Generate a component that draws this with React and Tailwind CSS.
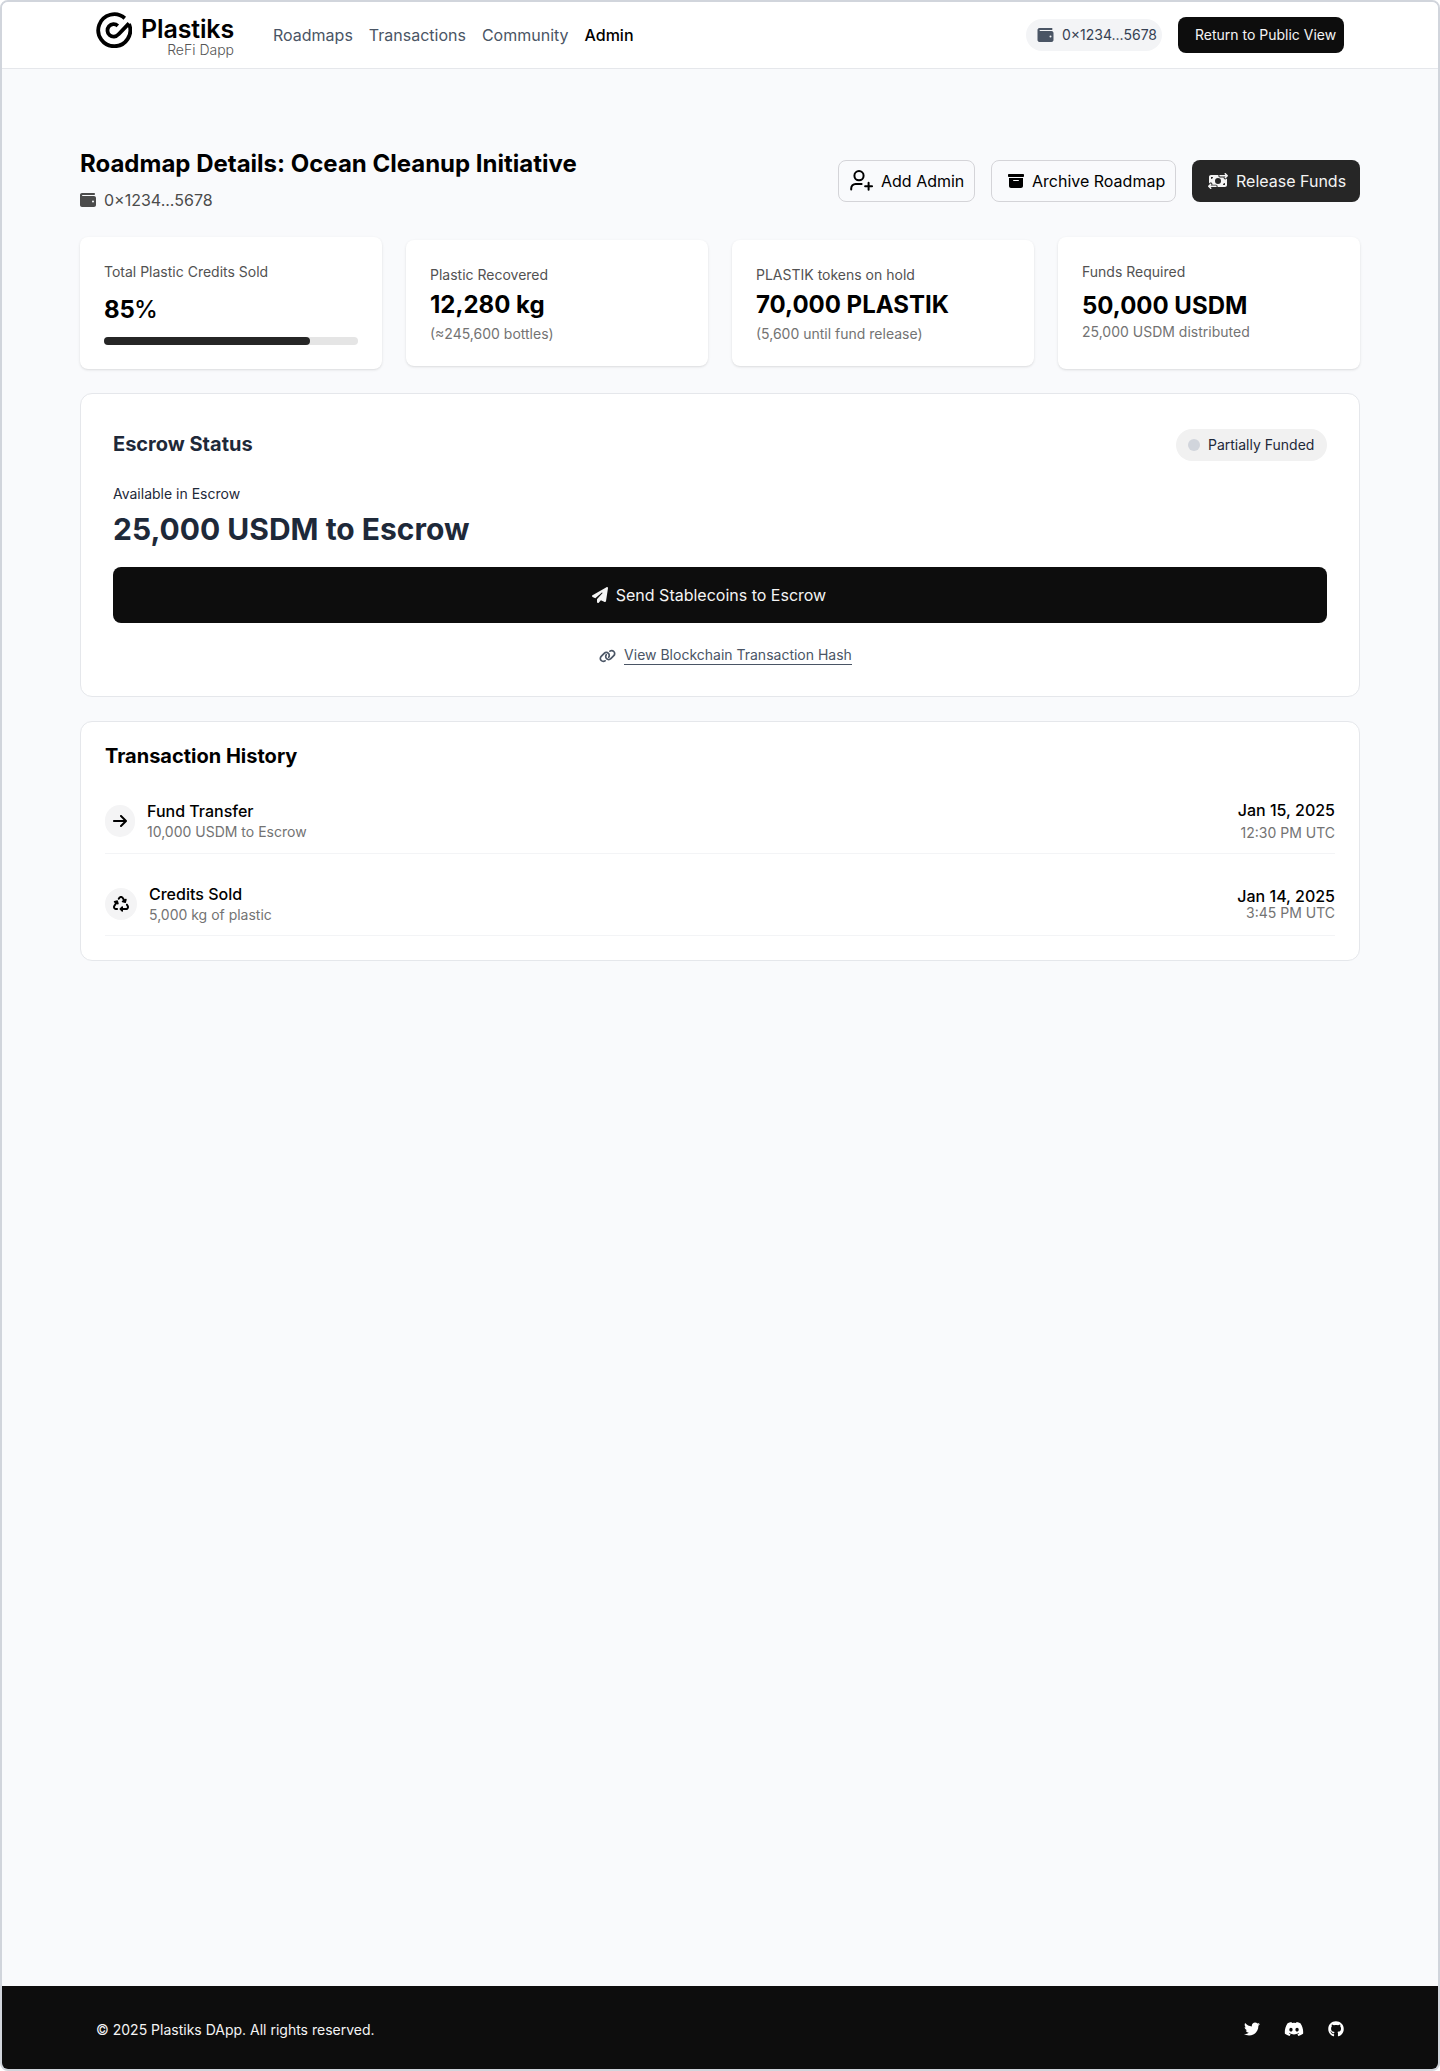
import React from "react";
import {
  FaWallet,
  FaPaperPlane,
  FaLink,
  FaArrowRight,
  FaRecycle,
  FaTwitter,
  FaDiscord,
  FaGithub,
  FaBoxArchive,
  FaMoneyBillTransfer,
} from "react-icons/fa6";

function Logo() {
  return (
    <div className="flex h-[48px] w-[138px] mt-[9px]">
      <svg viewBox="0 0 36 36" className="mt-px h-9 w-9 shrink-0" fill="none" stroke="#000" strokeWidth="3.8">
        <path d="M28.8 6.2A16 16 0 1 0 33 12" />
        <path d="M21.8 13.8A6.2 6.2 0 1 0 22.4 22.4L33 11.4" />
      </svg>
      <div className="flex w-[102px] flex-col items-end">
        <span className="mt-[3px] text-[25px] leading-[30px] font-semibold tracking-[-0.15px] text-black">Plastiks</span>
        <span className="text-[14px] leading-[16px] font-light text-[#555] mt-[-2px]">ReFi Dapp</span>
      </div>
    </div>
  );
}

function UserPlus() {
  return (
    <svg viewBox="0 0 24 24" className="h-6 w-6 shrink-0" fill="none" stroke="currentColor" strokeWidth="2" strokeLinecap="round">
      <circle cx="10" cy="6.7" r="4.6" />
      <path d="M2.2 20.4v-1a4.4 4.4 0 0 1 4.4-4.4h6" />
      <path d="M19.6 13.8v7M16.1 17.3h7" />
    </svg>
  );
}

function Header() {
  return (
    <header className="flex h-[67px] border-b border-gray-200 bg-white pl-[94px] pr-[94px]">
      <Logo />
      <nav className="ml-[39px] flex h-[66px] items-center gap-4 text-base text-gray-600">
        <a>Roadmaps</a>
        <a>Transactions</a>
        <a>Community</a>
        <a className="font-medium text-black">Admin</a>
      </nav>
      <div className="ml-auto flex h-[66px] items-center gap-4">
        <div className="flex h-8 w-[136px] items-center gap-2 rounded-full bg-gray-100 pl-[11px] text-sm whitespace-nowrap text-gray-700">
          <FaWallet className="h-4 w-[17px] shrink-0 text-gray-600" />
          0×1234...5678
        </div>
        <button className="flex h-9 w-[166px] items-center rounded-lg bg-[#0d0d0d] pl-[17px] text-sm whitespace-nowrap text-[#f4f4f4]">
          Return to Public View
        </button>
      </div>
    </header>
  );
}

function StatCard({ label, value, note, className, labelClass, valueClass, noteClass, children }) {
  return (
    <div className={"rounded-lg bg-white px-6 shadow-sm " + className}>
      <p className={"text-sm leading-5 text-[#525252] " + labelClass}>{label}</p>
      <p className={"text-2xl leading-8 font-bold text-black " + valueClass}>{value}</p>
      {note && <p className={"text-sm leading-5 text-[#737373] " + noteClass}>{note}</p>}
      {children}
    </div>
  );
}

function Transaction({ icon, circle, title, detail, date, time, className, rightClass, timeClass }) {
  return (
    <div className={"flex border-b border-[#f3f4f6] " + className}>
      <div className={"mt-[18px] flex h-8 shrink-0 items-center justify-center rounded-full bg-[#f4f4f5] text-black " + circle}>{icon}</div>
      <div className="ml-3 mt-[12px]">
        <p className="text-base leading-6 font-medium text-black">{title}</p>
        <p className="mt-[-1px] text-sm leading-5 text-[#737373]">{detail}</p>
      </div>
      <div className={"ml-auto text-right " + rightClass}>
        <p className="text-base leading-6 font-medium text-black">{date}</p>
        <p className={"text-sm leading-5 text-[#737373] " + timeClass}>{time}</p>
      </div>
    </div>
  );
}

export default function App() {
  return (
    <div className="h-[2071px] w-[1440px] bg-white font-['Inter',sans-serif]">
      <div className="flex h-[2071px] flex-col overflow-hidden rounded-lg border-2 border-gray-300 bg-[#f9fafc]">
        <Header />
        <main className="flex-1 px-[78px]">
          <div className="flex h-[168px] justify-between">
            <div className="pt-[79px]">
              <h1 className="text-2xl leading-8 font-bold text-black">Roadmap Details: Ocean Cleanup Initiative</h1>
              <div className="mt-[8px] flex items-center gap-2 text-base leading-6 text-[#4b4b4b]">
                <FaWallet className="h-4 w-4" />
                0×1234...5678
              </div>
            </div>
            <div className="mt-[91px] flex h-[42px] gap-4 text-base whitespace-nowrap">
              <button className="flex w-[137px] items-center gap-[8px] rounded-lg border border-[#d4d4d8] pl-[10px] text-black">
                <UserPlus />
                Add Admin
              </button>
              <button className="flex w-[185px] items-center gap-2 rounded-lg border border-[#d4d4d8] pl-4 text-black">
                <FaBoxArchive className="h-4 w-4 shrink-0" />
                Archive Roadmap
              </button>
              <button className="flex w-[168px] items-center gap-2 rounded-lg bg-[#262626] pl-4 text-[#f4f4f4]">
                <FaMoneyBillTransfer className="h-4 w-5 shrink-0" />
                Release Funds
              </button>
            </div>
          </div>

          <section className="grid h-[132px] grid-cols-4 items-center gap-6">
            <StatCard
              label="Total Plastic Credits Sold"
              value={<>85<span className="-ml-px font-medium tracking-[-1px]">%</span></>}
              className="h-[132px]"
              labelClass="mt-[25px]"
              valueClass="mt-[12px]"
            >
              <div className="mt-[11px] h-2 rounded-full bg-[#e5e5e5]">
                <div className="h-2 w-[206px] rounded-full bg-[#262626]" />
              </div>
            </StatCard>
            <StatCard label="Plastic Recovered" value="12,280 kg" note="(≈245,600 bottles)" className="h-[126px]" labelClass="mt-[25px]" valueClass="mt-[4px]" noteClass="mt-[3px]" />
            <StatCard label="PLASTIK tokens on hold" value="70,000 PLASTIK" note="(5,600 until fund release)" className="h-[126px]" labelClass="mt-[25px]" valueClass="mt-[4px]" noteClass="mt-[3px]" />
            <StatCard label="Funds Required" value="50,000 USDM" note="25,000 USDM distributed" className="h-[132px]" labelClass="mt-[25px]" valueClass="mt-[8px]" noteClass="" />
          </section>

          <section className="mt-6 h-[304px] rounded-xl border border-gray-200 bg-white px-8 pt-[35px]">
            <div className="flex h-8 items-center justify-between">
              <h2 className="mt-[-2px] text-xl leading-7 font-bold text-gray-800">Escrow Status</h2>
              <div className="flex h-8 w-[151px] items-center gap-2 rounded-full bg-[#f1f1f1] pl-3 text-sm whitespace-nowrap text-gray-800">
                <span className="h-3 w-3 rounded-full bg-gray-300" />
                Partially Funded
              </div>
            </div>
            <p className="mt-[23px] text-sm leading-5 text-gray-800">Available in Escrow</p>
            <p className="mt-[7px] text-[30px] leading-9 font-bold text-gray-800">25,000 USDM to Escrow</p>
            <button className="mt-5 flex h-14 w-full items-center justify-center gap-2 rounded-lg bg-[#0d0d0d] pr-[22px] text-base text-[#f4f4f4]">
              <FaPaperPlane className="h-4 w-4" />
              Send Stablecoins to Escrow
            </button>
            <div className="mt-[23px] flex items-center justify-center gap-2 pl-[11px] text-sm leading-5 text-gray-600">
              <FaLink className="h-[14px] w-[17px]" />
              <span className="border-b border-gray-600 leading-[18px]">View Blockchain Transaction Hash</span>
            </div>
          </section>

          <section className="mt-6 h-[240px] rounded-xl border border-gray-200 bg-white px-6 pt-[20px]">
            <h2 className="text-xl leading-7 font-bold text-black">Transaction History</h2>
            <Transaction
              icon={<FaArrowRight className="h-4 w-[14px]" />}
              circle="w-[30px]"
              title="Fund Transfer"
              detail="10,000 USDM to Escrow"
              date="Jan 15, 2025"
              time="12:30 PM UTC"
              className="mt-[17px] h-[67px]"
              rightClass="mt-[11px]"
              timeClass="mt-[1px]"
            />
            <Transaction
              icon={<FaRecycle className="h-4 w-4" />}
              circle="w-8"
              title="Credits Sold"
              detail="5,000 kg of plastic"
              date="Jan 14, 2025"
              time="3:45 PM UTC"
              className="mt-[16px] h-[66px]"
              rightClass="mt-[14px]"
              timeClass="mt-[-5px]"
            />
          </section>
        </main>
        <footer className="flex h-[83px] items-center justify-between bg-[#0d0d0d] px-[94px] text-sm text-[#f4f4f4]">
          <p className="mt-[4px]">© 2025 Plastiks DApp. All rights reserved.</p>
          <div className="mt-[3px] flex items-center gap-6 text-white">
            <FaTwitter className="h-4 w-4" />
            <FaDiscord className="h-4 w-5" />
            <FaGithub className="h-4 w-4" />
          </div>
        </footer>
      </div>
    </div>
  );
}
